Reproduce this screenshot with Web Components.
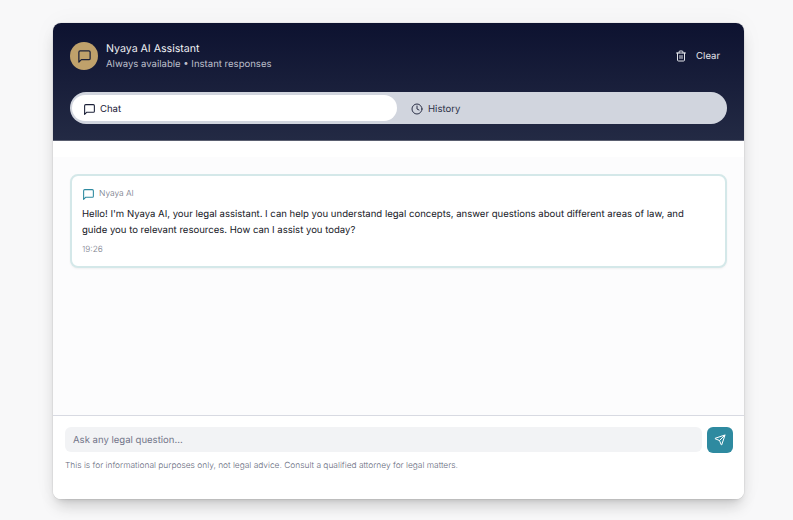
<!DOCTYPE html>
<html>
<head>
<meta charset="utf-8">
<style>
html, body { margin: 0; height: 100%; }
body { background: #f8f8f9; font-family: Inter, "Liberation Sans", sans-serif; text-rendering: geometricPrecision; overflow: hidden; }
</style>
</head>
<body>
<chat-panel>
  <chat-header slot="header"></chat-header>
  <chat-message slot="body" sender="Nyaya AI" time="19:26">Hello! I'm Nyaya AI, your legal assistant. I can help you understand legal concepts, answer questions about different areas of law, and guide you to relevant resources. How can I assist you today?</chat-message>
  <chat-input slot="footer"></chat-input>
</chat-panel>
<script>
const bubble = '<path d="M21 15a2 2 0 0 1-2 2H7l-4 4V5a2 2 0 0 1 2-2h14a2 2 0 0 1 2 2z"/>';

class ChatPanel extends HTMLElement {
    constructor() {
        super();
        this.attachShadow({mode: "open"}).innerHTML = `
        <style>
        :host { display: flex; flex-direction: column; box-sizing: border-box; width: 691px; height: 476px; margin: 23px 0 0 53px; background: #fff; border-radius: 8px; overflow: hidden; box-shadow: 0 10px 15px -3px rgba(0,0,0,.16), 0 4px 6px -4px rgba(0,0,0,.16), 0 0 0 1px rgba(0,0,0,.04), 0 0 24px rgba(0,0,0,.04); }
        .body { flex: 1; margin-top: 16px; padding: 17px 17px; background: #fcfcfd; }
        </style>
        <slot name="header"></slot>
        <div class="body"><slot name="body"></slot></div>
        <slot name="footer"></slot>`;
    }
}

class ChatHeader extends HTMLElement {
    constructor() {
        super();
        this.attachShadow({mode: "open"}).innerHTML = `
        <style>
        :host { display: block; height: 118px; box-sizing: border-box; padding: 19px 17px 0; background: linear-gradient(180deg, #0d1230 0%, #232a44 100%); border-bottom: 1px solid #5a5f70; }
        .top { display: flex; align-items: center; height: 28px; }
        .avatar { width: 28px; height: 28px; border-radius: 50%; background: #bfa16b; display: flex; align-items: center; justify-content: center; margin-right: 8px; }
        .titles { flex: 1; }
        .title { color: #f2f3f6; font-size: 10.6px; line-height: 16px; padding-top: 1px; }
        .sub { color: #bcbfca; font-size: 9.55px; line-height: 15px; }
        .clear { display: flex; align-items: center; gap: 9px; color: #e3e5ea; font-size: 9.55px; margin-right: 7px; }
        .tabs { display: flex; height: 32px; box-sizing: border-box; margin-top: 22px; padding: 3px 2px; background: #d1d5de; border-radius: 16px; }
        .tab { display: flex; align-items: center; gap: 4px; box-sizing: border-box; padding-top: 2px; font-size: 9.55px; color: #1b2038; border-radius: 13px; }
        .tab.on { width: 325px; padding-left: 11px; background: #fff; }
        .tab.off { padding-left: 14px; gap: 5px; color: #2c3148; }
        svg { display: block; fill: none; stroke: currentColor; stroke-width: 2; stroke-linecap: round; stroke-linejoin: round; }
        </style>
        <div class="top">
            <div class="avatar"><svg width="15" height="15" viewBox="0 0 24 24" style="color:#1b2038">${bubble}</svg></div>
            <div class="titles">
                <div class="title">Nyaya AI Assistant</div>
                <div class="sub">Always available • Instant responses</div>
            </div>
            <div class="clear">
                <svg width="12" height="12" viewBox="0 0 24 24"><path d="M3 6h18"/><path d="M19 6v14a2 2 0 0 1-2 2H7a2 2 0 0 1-2-2V6"/><path d="M8 6V4a2 2 0 0 1 2-2h4a2 2 0 0 1 2 2v2"/><path d="M10 11v6"/><path d="M14 11v6"/></svg>
                <span>Clear</span>
            </div>
        </div>
        <div class="tabs">
            <div class="tab on"><svg width="13" height="13" viewBox="0 0 24 24">${bubble}</svg><span>Chat</span></div>
            <div class="tab off"><svg width="12" height="12" viewBox="0 0 24 24"><circle cx="12" cy="12" r="10"/><path d="M12 6v6l4 2"/></svg><span>History</span></div>
        </div>`;
    }
}

class ChatMessage extends HTMLElement {
    constructor() {
        super();
        this.attachShadow({mode: "open"}).innerHTML = `
        <style>
        :host { display: block; box-sizing: border-box; height: 94px; padding: 10px 10px 0; background: #fff; border: 2px solid #d4e8e9; border-radius: 8px; box-shadow: 0 1px 2px rgba(0,0,0,.05); }
        .who { display: flex; align-items: center; gap: 4px; height: 16px; font-size: 8.4px; font-weight: 350; color: #707585; }
        .text { margin-top: 5px; max-width: 610px; font-size: 9.55px; line-height: 16px; color: #16181f; }
        .time { margin-top: 5px; font-size: 8.4px; font-weight: 350; line-height: 12px; color: #80848f; }
        svg { display: block; fill: none; stroke: #2e8aa0; stroke-width: 2; stroke-linecap: round; stroke-linejoin: round; }
        </style>
        <div class="who"><svg width="13" height="13" viewBox="0 0 24 24">${bubble}</svg>${this.getAttribute("sender")}</div>
        <div class="text"><slot></slot></div>
        <div class="time">${this.getAttribute("time")}</div>`;
    }
}

class ChatInput extends HTMLElement {
    constructor() {
        super();
        this.attachShadow({mode: "open"}).innerHTML = `
        <style>
        :host { display: block; height: 84px; box-sizing: border-box; padding: 11px 11px 0 12px; background: #fff; border-top: 1px solid #d8dae2; }
        .row { display: flex; gap: 5px; }
        .field { flex: 1; height: 25px; display: flex; align-items: center; padding-left: 8px; background: #f2f3f5; border-radius: 6px; font-size: 9.55px; color: #72768a; }
        .field span { padding-top: 2px; }
        .send { width: 26px; height: 26px; border-radius: 6px; background: #2e8aa0; display: flex; align-items: center; justify-content: center; }
        .note { margin-top: 7px; font-size: 8.4px; font-weight: 350; line-height: 12px; color: #686c7e; }
        svg { display: block; fill: none; stroke: #fff; stroke-width: 2; stroke-linecap: round; stroke-linejoin: round; }
        </style>
        <div class="row">
            <div class="field"><span>Ask any legal question...</span></div>
            <div class="send"><svg width="12" height="12" viewBox="0 0 24 24"><path d="M14.5 21.7a.5.5 0 0 0 .9 0l6.5-19a.5.5 0 0 0-.6-.6l-19 6.5a.5.5 0 0 0 0 .9l7.9 3.2a2 2 0 0 1 1.1 1.1z"/><path d="M21.9 2.1 10.9 13.1"/></svg></div>
        </div>
        <div class="note">This is for informational purposes only, not legal advice. Consult a qualified attorney for legal matters.</div>`;
    }
}

customElements.define("chat-panel", ChatPanel);
customElements.define("chat-header", ChatHeader);
customElements.define("chat-message", ChatMessage);
customElements.define("chat-input", ChatInput);
</script>
</body>
</html>
